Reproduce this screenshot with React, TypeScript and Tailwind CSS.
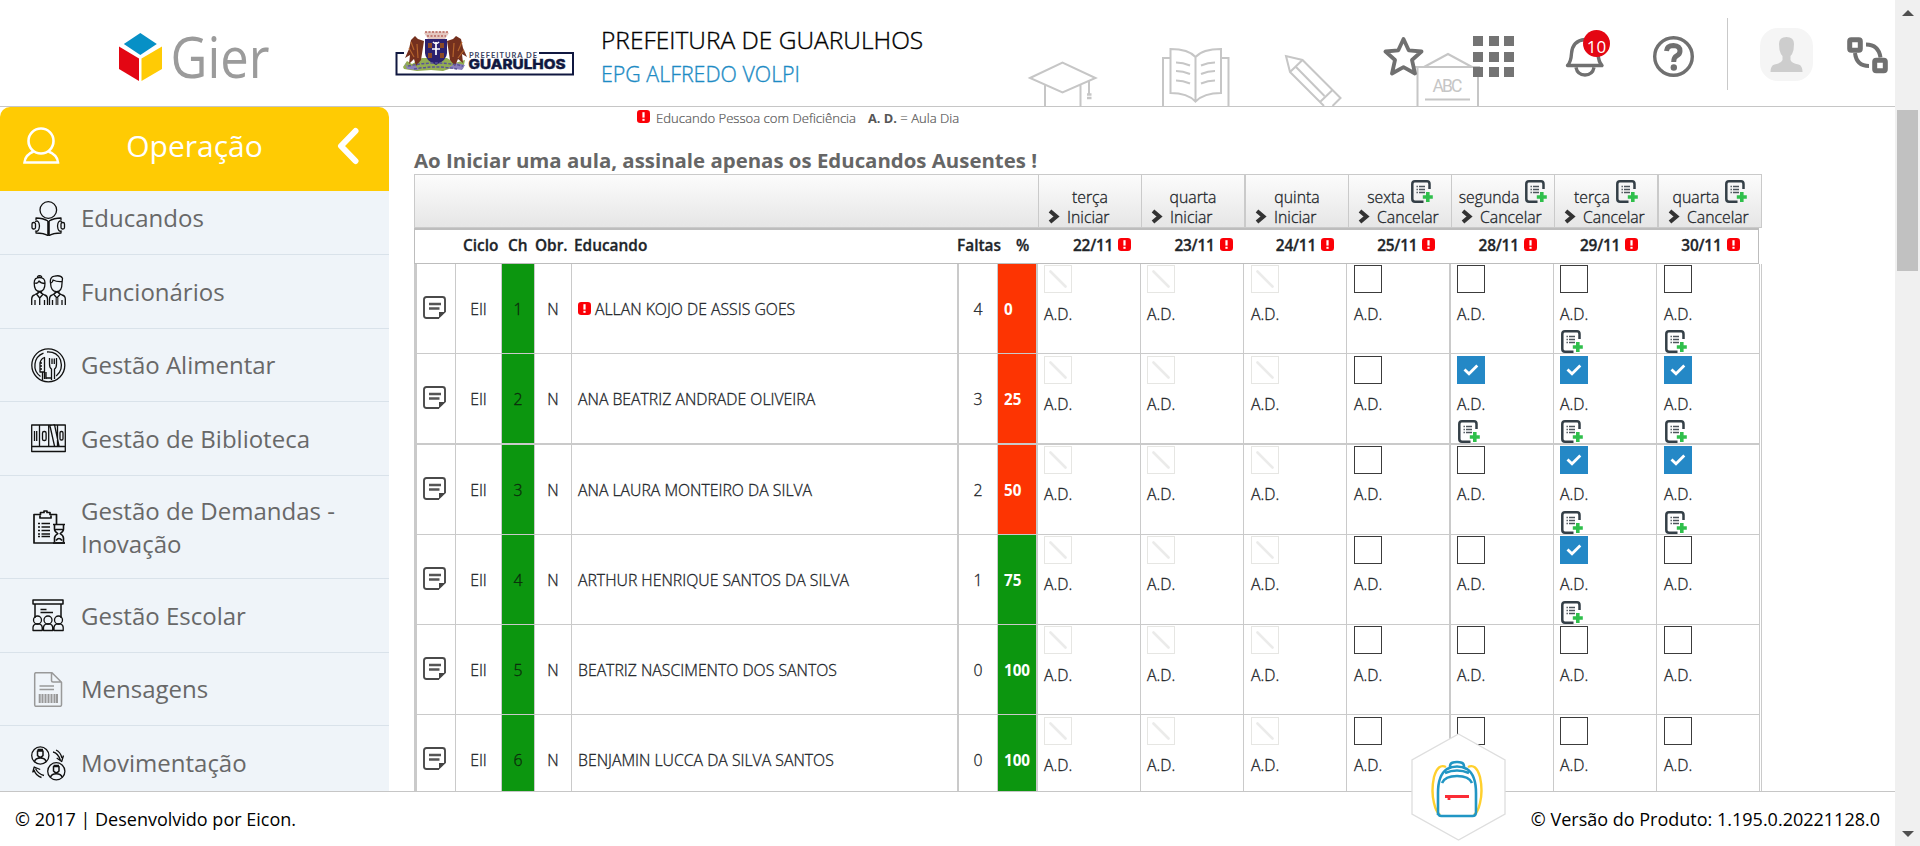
import type { ReactNode } from "react";

const Alert = ({ className = "" }: { className?: string }) => (
  <svg className={`h-[13px] w-[13px] shrink-0 ${className}`} viewBox="0 0 13 13">
    <rect width="13" height="13" rx="3.2" fill="#fb0007" />
    <rect x="5.4" y="2.2" width="2.2" height="5.4" fill="#fff" />
    <rect x="5.4" y="8.8" width="2.2" height="2" fill="#fff" />
  </svg>
);

const DocPlus = ({ className = "" }: { className?: string }) => (
  <svg className={`h-[23px] w-[22px] shrink-0 ${className}`} viewBox="0 0 22 23" fill="none">
    <path d="M18.500 9V4Q18.500 1.300 16 1.300H4Q1.300 1.300 1.300 4v15Q1.300 21.700 4 21.700h8.500" stroke="#343f47" strokeWidth="2.500" />
    <path d="M5.500 6.500h1.400M8 6.500h6M5.500 9.500h1.400M8 9.500h6M5.500 12.500h1.400M8 12.500h6" stroke="#4d555c" strokeWidth="1.700" />
    <path d="M16.800 12v10M11.800 17h10" stroke="#2fbf4b" strokeWidth="3.600" />
  </svg>
);

const Note = () => (
  <svg className="h-[23px] w-[23px]" viewBox="0 0 23 23" fill="none">
    <path d="M16 22H3.500Q1 22 1 19.500V3.500Q1 1 3.500 1h16Q22 1 22 3.500V16" stroke="#4a4a4a" strokeWidth="1.900" />
    <path d="M16 22.500V16h6.800z" fill="#444" />
    <path d="M6 8h12M6 12.500h10.500" stroke="#555" strokeWidth="2.300" />
  </svg>
);

const Arrow = () => (
  <svg className="h-[15px] w-[12px] shrink-0" viewBox="0 0 12 15" fill="none">
    <path d="M2 2l6.500 5.500L2 13" stroke="#333" strokeWidth="4" />
  </svg>
);

type Mark = "x" | "o" | "c";

const Box = ({ kind }: { kind: Mark }) => {
  if (kind === "c")
    return (
      <span className="flex h-7 w-7 items-center justify-center bg-[#2488c6]">
        <svg className="h-3 w-4" viewBox="0 0 16 12" fill="none">
          <path d="M1.500 5.500l4.500 4.300L14.300 1.500" stroke="#fff" strokeWidth="2.800" />
        </svg>
      </span>
    );
  if (kind === "x")
    return (
      <span className="flex h-7 w-7 items-center justify-center border border-[#e6e6e3]">
        <svg className="h-[18px] w-[18px]" viewBox="0 0 18 18">
          <path d="M1.500 1.500l15 15" stroke="#ebebea" strokeWidth="2.600" strokeLinecap="round" />
        </svg>
      </span>
    );
  return <span className="block h-7 w-7 border border-[#3c3c3c]" />;
};

const days = [
  { name: "terça", action: "Iniciar", date: "22/11" },
  { name: "quarta", action: "Iniciar", date: "23/11" },
  { name: "quinta", action: "Iniciar", date: "24/11", thick: true },
  { name: "sexta", action: "Cancelar", date: "25/11", doc: true },
  { name: "segunda", action: "Cancelar", date: "28/11", doc: true },
  { name: "terça", action: "Cancelar", date: "29/11", doc: true },
  { name: "quarta", action: "Cancelar", date: "30/11", doc: true, thick: true },
];

type Row = { n: number; name: string; alert?: boolean; miss: number; pct: number; marks: Mark[]; docs: number[]; h: string; top: string; line: string };

const rows: Row[] = [
  { n: 1, name: "ALLAN KOJO DE ASSIS GOES", alert: true, miss: 4, pct: 0, marks: ["x", "x", "x", "o", "o", "o", "o"], docs: [5, 6], h: "h-[90px] border-b", top: "pt-px", line: "leading-[25px]" },
  { n: 2, name: "ANA BEATRIZ ANDRADE OLIVEIRA", miss: 3, pct: 25, marks: ["x", "x", "x", "o", "c", "c", "c"], docs: [4, 5, 6], h: "h-[91px] border-b-2", top: "pt-[2px]", line: "leading-[25px]" },
  { n: 3, name: "ANA LAURA MONTEIRO DA SILVA", miss: 2, pct: 50, marks: ["x", "x", "x", "o", "o", "c", "c"], docs: [5, 6], h: "h-[90px] border-b", top: "pt-px", line: "leading-[23px]" },
  { n: 4, name: "ARTHUR HENRIQUE SANTOS DA SILVA", miss: 1, pct: 75, marks: ["x", "x", "x", "o", "o", "c", "o"], docs: [5], h: "h-[90px] border-b", top: "pt-px", line: "leading-[23px]" },
  { n: 5, name: "BEATRIZ NASCIMENTO DOS SANTOS", miss: 0, pct: 100, marks: ["x", "x", "x", "o", "o", "o", "o"], docs: [], h: "h-[90px] border-b", top: "pt-px", line: "leading-[25px]" },
  { n: 6, name: "BENJAMIN LUCCA DA SILVA SANTOS", miss: 0, pct: 100, marks: ["x", "x", "x", "o", "o", "o", "o"], docs: [], h: "h-[90px] border-b", top: "pt-[2px]", line: "leading-[25px]" },
];

const Icon = ({ children, color = "#111" }: { children: ReactNode; color?: string }) => (
  <svg className="h-[35px] w-[35px] shrink-0" viewBox="0 0 35 35" fill="none" stroke={color} strokeWidth="1.3" strokeLinejoin="round">
    {children}
  </svg>
);

const menu: { label: string; h: string; pad?: string; icon: ReactNode }[] = [
  {
    label: "Educandos",
    h: "h-[73px] border-b",
    pad: "pb-[2px]",
    icon: (
      <Icon>
        <circle cx="17.300" cy="9" r="8.300" />
        <path d="M17 20q-5-3-12-3v2M18 20q5-3 12-3v2M5 31v1q8 0 12.500 3 4.500-3 12.500-3v-1" />
        <path d="M17.500 20v14" strokeWidth="2.600" />
        <rect x="1" y="21.500" width="3.500" height="6.500" rx="1.500" />
        <rect x="30" y="21.500" width="3.500" height="6.500" rx="1.500" />
        <path d="M4 20.500q4-2 4.500 4.500-.5 6.500-4.500 5M31 20.500q-4-2-4.500 4.500.5 6.500 4.500 5" />
      </Icon>
    ),
  },
  {
    label: "Funcionários",
    h: "h-[74px] border-b",
    icon: (
      <Icon>
        <path d="M.7 31v-6q0-3.500 3-4.200L8.500 18l5 3q3 .7 3 4v6M4 31v-5M13.500 31v-5M8.700 23v8M5.500 20l3.200 4 3.500-4M3.200 9q0-5.500 5.400-5.500T14 9q0 8.500-5.400 8.500T3.200 9zM4 9q2.500 1 4-2 2 2.500 6 2.500M6.500 4q-.5-2 2-2.300 2.700.3 2.200 2.300M7 17v3M10.500 17v3" />
        <path d="M18.500 31v-6q0-3.500 3-4.200L26 18l5 3q3.300.7 3.300 4v6M21.500 31v-5M31 31v-5M22.500 20l3.400 4 3.500-4M19.500 9q-1-6 4-6.800 6-1.500 8 2l-.5 5q0 8.500-5.500 8.500T19.500 9zM20 9q2-1 2-3 4 2 9 1.500M24 17v3M28 17v3" />
        <path d="M26 24v7" strokeWidth="3" stroke="#555" />
      </Icon>
    ),
  },
  {
    label: "Gestão Alimentar",
    h: "h-[73px] border-b",
    pad: "pb-[2px]",
    icon: (
      <Icon>
        <circle cx="17.300" cy="17.300" r="16.500" />
        <path d="M9.500 28.500a13.300 13.300 0 0 1 3-23.300M16 4q10-.5 13.500 8 3 10-4.300 16" />
        <path d="M13.500 10v21M9 24V15q1-4.500 4.500-5.500v14.500zM9 15h2M9 18h2M9 21h2M11.500 24v8M15 31V24M18.500 10v6q0 4 2 5v11M25.500 10v6q0 4-2 5v10M21 10.500v5.500M23.300 10.500v5.500M15 30h5" />
      </Icon>
    ),
  },
  {
    label: "Gestão de Biblioteca",
    h: "h-[74px] border-b",
    icon: (
      <Icon>
        <path d="M.700 4h33.600v26.500H.700zM.700 25.500h33.600M8.500 4v21.500M17.700 4v21.500M26.500 4v21.500M18.500 4.500l5-.8 4.500 21.300M19 5l4.500 20M3.500 10v10M5.700 10v10" />
        <rect x="11.500" y="10.500" width="3.600" height="9" rx="1.600" />
        <rect x="29" y="10.500" width="3" height="8.500" rx="1.300" />
      </Icon>
    ),
  },
  {
    label: "Gestão de Demandas - Inovação",
    h: "h-[103px] border-b",
    icon: (
      <Icon>
        <path d="M25.500 14V4.500H19V2.500h-3V1h-3v1.500h-3.500v2H3V33h31M9 5.500v2.500h11V5.500" strokeWidth="1.700" />
        <path d="M7 13.500h2M10.500 13.500H19M7 17h2M10.500 17H19M7 20.500h2M10.500 20.500H19M7 24h2M10.500 24H19M7 26.500h2M10.500 26.500H19" strokeWidth="1.600" />
        <path d="M22 14.500h12M22 33h12M23.500 15v4q0 2.500 3.300 4.600-3.300 2-3.300 4.600V32M32.500 15v4q0 2.500-3.300 4.600 3.300 2 3.300 4.600V32M24.500 19.500h7M25 30.500q3-4 6 0" strokeWidth="1.600" />
      </Icon>
    ),
  },
  {
    label: "Gestão Escolar",
    h: "h-[74px] border-b",
    icon: (
      <Icon>
        <path d="M2 2h30v4H2zM4 6v14M30 6v14M9.500 11.500h6M9.500 14.500H22" strokeWidth="1.500" />
        <circle cx="6.500" cy="22" r="4" />
        <circle cx="17" cy="22" r="4" />
        <circle cx="27.500" cy="22" r="4" />
        <path d="M2 32.500v-3q0-2.500 2.500-3.500h4.200q2.500 1 2.500 3.500v3zM12.500 32.500v-3q0-2.500 2.500-3.500h4.200q2.500 1 2.500 3.500v3zM23 32.500v-3q0-2.500 2.500-3.500h4.200q2.500 1 2.500 3.500v3z" />
      </Icon>
    ),
  },
  {
    label: "Mensagens",
    h: "h-[73px] border-b",
    pad: "pb-[2px]",
    icon: (
      <Icon color="#999">
        <path d="M3.700 2Q3.700.7 5 .7h16l9.500 9.500v22.500q0 1.600-1.500 1.600H5q-1.300 0-1.300-1.600zM20.500 1v7.500q0 1.500 1.500 1.500h8M8.500 14h14.500M8.500 17.500h14.500" strokeWidth="1.500" />
        <path d="M8.700 22v9M11.500 22v9M14.500 22v9M17.500 22v9M20.500 22v9M23.500 22v9M26 22v9" strokeWidth="2" />
      </Icon>
    ),
  },
  {
    label: "Movimentação",
    h: "h-[74px]",
    pad: "pb-[2px]",
    icon: (
      <Icon>
        <circle cx="9.300" cy="9.500" r="8.600" />
        <circle cx="25.300" cy="25.300" r="8.600" />
        <path d="M6.500 5h5.500v4.500q-2.700 3.500-5.500 0zM3.500 15.500q1-3.500 5.800-3.500t5.800 3.500M22.500 20.500H28V25q-2.700 3.500-5.500 0zM19.500 31.300q1-3.500 5.800-3.500t5.800 3.500M6.500 3.500H12M22.500 19.500H28" strokeWidth="1.500" />
        <path d="M22 6q5 1 7.500 8.500M25 4q4.500 2 6 8M32.500 9.500l-1.800 6-5-3.500M13 29.500q-6-1.500-8.500-7M10.500 31.500Q5 30 3 24M1.700 26.500l1.500-5.500 6 2.500" />
      </Icon>
    ),
  },
];

const Doodles = () => (
  <svg className="absolute left-[1020px] top-[40px] h-[66px] w-[470px]" viewBox="1020 40 470 66" fill="none" stroke="#c6c6c6" strokeWidth="2">
    <path d="M1030 78l32.500-15.500L1095.500 78l-33 14.500zM1045 85v21M1080.500 85v21M1089 81v14" />
    <path d="M1087 94.500h4.500M1087 98h4.500" strokeWidth="2.500" />
    <path d="M1163 106V58h7M1228.500 106V58h-7M1170.500 49q18 0 25 8 7-8 25.500-8v44q-17 0-25.500 8.500-8-8.500-25-8.500zM1195.500 57v44" />
    <path d="M1176 62.500q7 0 14 3M1176 71q7 0 14 3M1176 80.500q7 0 14 3M1215 62.500q-7 0-14 3M1215 71q-7 0-14 3M1215 80.500q-7 0-14 3" />
    <path d="M1324 106l-34-34-4-16 16.500 4L1340.500 98l-8 8M1302.500 60L1290 72M1296 67l28.500 29M1332.500 90L1320 102" />
    <path d="M1424 67l24-13 24 13M1417.500 106V67M1478 106V67" />
    <path d="M1414 67h66M1425 99.500h45" />
    <text x="1432.500" y="92" fill="#c6c6c6" stroke="none" fontFamily="Roboto, sans-serif" fontSize="17.500" textLength="30">ABC</text>
  </svg>
);

const GierLogo = () => (
  <svg className="ml-[118px] h-[90px] w-[160px]" viewBox="118 9 160 90">
    <path d="M140.300 33l16.500 11L140.300 55 123.800 44z" fill="#0790c6" />
    <path d="M119 46.500l20 12V81l-20-12z" fill="#e30613" />
    <path d="M162 46.500l-20.500 12V81L162 69z" fill="#ffcb05" />
    <text x="170.500" y="78" fontFamily="Open Sans, sans-serif" fontSize="56" textLength="99" lengthAdjust="spacingAndGlyphs" fill="#9b9b9b">Gier</text>
  </svg>
);

const CityLogo = () => (
  <svg className="ml-[116px] mt-[20px] h-[50px] w-[182px]" viewBox="394 29 182 50">
    <path d="M404 53h-7.500v21.500H573V53h-34" fill="none" stroke="#101840" strokeWidth="2" />
    <path d="M403 67l4-6 5 3 10-6h25l8 5 10-3-2 9-8-2-12 4-12-1-14 1-13-2z" fill="#93ad52" />
    <path d="M405 63l3 4 7-2 4 5-12-1zM448 68l8-5 9 2-3 5z" fill="#8a7fbd" />
    <path d="M421 60l-5 6-2-7-5 5 1-9-5 3 4-9 2-9 4-4 3 3 6 2zM450 60l5 6 3-7 5 4-1-9 5 3-4-9-2-9-5-3-3 3-6 2z" fill="#74301e" />
    <path d="M411 42l3 8M409 48l5 9M462 42l-4 9M464 50l-6 8M417 44l1 14M454 43l-1 14" stroke="#b5642d" strokeWidth="1.200" />
    <path d="M424 33l4 6h17l4-6-3-1.500h-19z" fill="#e4c7c0" />
    <path d="M425 32h23M427 36h19" stroke="#b8675f" strokeWidth="1.500" strokeDasharray="2 1.500" />
    <path d="M425 39h22v14q0 7-11 12-11-5-11-12z" fill="#2b2170" />
    <path d="M428 43h4v5h-4zM440 43h4v5h-4zM428 53h4v5h-4zM440 53h4v5h-4z" fill="#8c4a26" />
    <path d="M436 42v13M432 49h8M433 42q3 3 6 0" stroke="#fff" strokeWidth="1.700" fill="none" />
    <path d="M408 66q28-6 55 0M414 69q22-4 43 0" stroke="#5a5399" strokeWidth="1.500" strokeDasharray="3 1.500" fill="none" />
    <text x="469" y="57.500" fontFamily="Lato, sans-serif" fontWeight="700" fontSize="7.500" textLength="68" fill="#3a3f60">PREFEITURA DE</text>
    <text x="468.500" y="69" fontFamily="Inter, sans-serif" fontWeight="800" fontSize="13.500" textLength="97" lengthAdjust="spacingAndGlyphs" fill="#101840" stroke="#101840" strokeWidth=".4">GUARULHOS</text>
  </svg>
);

const Header = () => (
  <header className="relative flex h-[107px] shrink-0 items-start border-b border-[#c6c6c6] bg-white">
    <Doodles />
    <div className="relative flex w-full items-start">
      <div className="flex pt-[9px]">
        <GierLogo />
        <CityLogo />
      </div>
      <div className="ml-[25px] w-[780px] pt-[23px]">
        <div className="text-[24.500px] font-light leading-[33px] text-black [-webkit-text-stroke:0.35px_#000]">PREFEITURA DE GUARULHOS</div>
        <div className="pt-px text-[21.400px] font-light leading-[34px] text-[#1d8bc4] [-webkit-text-stroke:0.35px_#1d8bc4]">EPG ALFREDO VOLPI</div>
      </div>
      <svg className="ml-0.5 mt-[36px] h-[41px] w-[41px]" viewBox="0 0 41 41" fill="none" stroke="#707070" strokeWidth="3.800" strokeLinejoin="round">
        <path d="M20.500 3l5.200 11.300 12.800 1.200-9.500 8.500 3 13.500-11.500-6.300L9 37.500l3-13.500-9.500-8.500 12.800-1.200z" />
      </svg>
      <div className="ml-[49px] mt-[36px] grid h-[41px] w-[41px] grid-cols-3 gap-[5.500px]">
        {Array.from({ length: 9 }, (_, i) => (
          <span key={i} className="bg-[#747474]" />
        ))}
      </div>
      <div className="relative ml-[51px] mt-[36px]">
        <svg className="h-[41px] w-[40px]" viewBox="0 0 40 41" fill="none" stroke="#707070" strokeWidth="3.400">
          <path d="M2.500 29.500q3.500-3.500 4-12Q7.500 4.500 20 3.500q12 1 13 14 .5 8.500 4 12zM11 31.500q1.500 7.500 9 7.500t9-7.500" strokeLinejoin="round" />
        </svg>
        <span className="absolute -top-[6px] left-[18px] flex h-[27px] w-[27px] items-center justify-center rounded-full bg-[#e40613] pt-1.5 text-[17px] leading-none text-white">10</span>
      </div>
      <svg className="ml-[48px] mt-[36px] h-[41px] w-[41px]" viewBox="0 0 41 41" fill="none" stroke="#707070">
        <circle cx="20.500" cy="20.500" r="18.800" strokeWidth="3.400" />
        <path d="M13.500 15q.5-5.500 7-5.500 6.500.3 6.500 5.500 0 3.200-3.500 5Q20.700 21.500 20.700 26" strokeWidth="5" />
        <circle cx="20.800" cy="31.500" r="3.200" fill="#707070" stroke="none" />
      </svg>
      <span className="ml-[33px] mt-[18px] h-[72px] w-px bg-[#c9c9c9]" />
      <svg className="ml-[32px] mt-[28px] h-[53px] w-[53px]" viewBox="0 0 53 53">
        <rect width="53" height="53" rx="18" fill="#f5f5f5" />
        <path d="M19 16q0-7 7.500-7t7.500 7l-.5 6q-1 4-3 6v4q1 3 8 4.500 4 1 4 7.500H10.500q0-6.500 4-7.500 7-1.500 8-4.500v-4q-2-2-3-6z" fill="#cdcdcd" />
      </svg>
      <svg className="ml-[34px] mt-[37px] h-[37px] w-[41px]" viewBox="0 0 41 37" fill="none" stroke="#707070">
        <rect x="2.700" y="2.700" width="10.600" height="10.600" rx="1.500" strokeWidth="5" />
        <rect x="27.700" y="23.200" width="10.600" height="10.600" rx="1.500" strokeWidth="5" />
        <path d="M19 7.500q12.500 0 14.500 13M8 16q1.500 13 14 13" strokeWidth="4" />
      </svg>
    </div>
  </header>
);

const Sidebar = () => (
  <aside className="flex w-[389px] shrink-0 flex-col overflow-hidden bg-[#eff4f9]">
    <div className="h-[84px] shrink-0 bg-white">
      <div className="flex h-[84px] items-start rounded-t-[10px] bg-[#ffcb03]">
        <svg className="ml-[23px] mt-[20px] h-[37px] w-[37px]" viewBox="0 0 37 37" fill="none" stroke="#fff" strokeWidth="2.600">
          <ellipse cx="18" cy="14" rx="12.500" ry="12.500" />
          <path d="M10.500 24.500Q2 28 1.500 35.500h33.500Q34.500 28 25.500 24.500" />
        </svg>
        <span className="w-[269px] text-center text-[30px] leading-[77px] text-white">Operação</span>
        <svg className="ml-[6px] mt-[20px] h-[38px] w-[25px]" viewBox="0 0 25 38" fill="none">
          <path d="M20.500 4L6 19l14.500 15" stroke="#fff" strokeWidth="6" strokeLinecap="round" strokeLinejoin="round" />
        </svg>
      </div>
    </div>
    <nav className="min-h-0 flex-1 overflow-hidden">
      <ul className="-mt-[9px]">
        {menu.map((m) => (
          <li key={m.label} className={`flex items-center border-[#d9e2ea] pl-[31px] ${m.h}`}>
            {m.icon}
            <span className={`ml-[15px] w-[270px] text-[24px] leading-[33px] text-[#686868] ${m.pad ?? ""}`}>{m.label}</span>
          </li>
        ))}
      </ul>
    </nav>
  </aside>
);

const cell = "flex shrink-0 items-center border-[#cacaca]";

const Attendance = () => (
  <div className="w-[1348px] text-[15.800px] font-light text-[#212529] [-webkit-text-stroke:0.3px]">
    <div className="flex h-[54px] border-y border-r border-[#cacaca] bg-gradient-to-b from-[#fcfcfc] to-[#e6e6e6]">
      <div className="w-[624px] shrink-0 border-l border-[#cacaca]" />
      {days.map((d) => (
        <div key={d.date} className={`shrink-0 border-[#cacaca] ${d.thick ? "w-[104px] border-l-2" : "w-[103px] border-l"}`}>
          <div className="flex h-[34px] items-start justify-center gap-[6px]">
            <span className="pt-[11px] leading-[22px]">{d.name}</span>
            {d.doc && <DocPlus className="mt-[5px]" />}
          </div>
          <div className="flex h-[18px] items-start pl-[9px] leading-[17px]">
            <Arrow />
            <span className="ml-[7px]">{d.action}</span>
          </div>
        </div>
      ))}
    </div>
    <div className="flex h-[36px] w-[1345px] items-center border border-t-2 border-[#bdbdbd] pb-[2px] text-[15.400px] font-semibold">
      <span className="ml-[48px] w-[45px] shrink-0">Ciclo</span>
      <span className="w-[27px] shrink-0">Ch</span>
      <span className="w-[39px] shrink-0">Obr.</span>
      <span className="w-[383px] shrink-0">Educando</span>
      <span className="w-[59px] shrink-0">Faltas</span>
      <span className="w-[57px] shrink-0">%</span>
      {days.map((d) => (
        <span key={d.date} className="flex w-[101.400px] shrink-0 items-center tracking-[-0.200px]">
          {d.date}
          <Alert className="-mt-[2px] ml-[5px]" />
        </span>
      ))}
    </div>
    <div className="border-l-[3px] border-r border-[#cacaca] leading-[22px]">
      {rows.map((r) => (
        <div key={r.n} className={`flex w-[1343px] border-[#cacaca] ${r.h}`}>
          <div className={`${cell} w-[39px] items-start border-r pl-[6px] pt-[32px]`}>
            <Note />
          </div>
          <div className={`${cell} w-[46px] justify-center border-r pt-px`}>EII</div>
          <div className={`${cell} w-[33px] justify-center border-r bg-[#0c960f] pt-px text-[#0b2a0c]`}>{r.n}</div>
          <div className={`${cell} w-[37px] justify-center border-r pt-px`}>N</div>
          <div className={`${cell} w-[387px] border-r-2 pl-[6px] pt-px`}>
            {r.alert && <Alert className="-mt-[2px] mr-[4px]" />}
            {r.name}
          </div>
          <div className={`${cell} w-[39px] justify-center border-r pt-px`}>{r.miss}</div>
          <div className={`${cell} w-[40px] border-r-2 pl-[6px] pt-px text-[15.200px] font-bold text-white [-webkit-text-stroke:0] ${r.pct > 50 ? "bg-[#0c960f]" : "bg-[#fd3402]"}`}>{r.pct}</div>
          {r.marks.map((m, i) => (
            <div
              key={i}
              className={`shrink-0 border-[#cacaca] ${i === 3 ? "w-[104px] border-r-2" : "w-[103px] border-r"} ${i === 2 || i === 3 || i === 6 ? "pl-[7px]" : "pl-[6px]"}`}
            >
              <div className={`h-[38px] ${r.top}`}>
                <Box kind={m} />
              </div>
              <div className={`h-[28px] ${r.line}`}>A.D.</div>
              {r.docs.includes(i) && <DocPlus className="ml-px" />}
            </div>
          ))}
        </div>
      ))}
    </div>
  </div>
);

const Backpack = () => (
  <svg className="absolute left-[1411px] top-[732px] h-[110px] w-[95px]" viewBox="0 0 95 110" fill="none">
    <path d="M47.500 2L94 28v54L47.500 108 1 82V28z" fill="#fff" stroke="#dedede" strokeWidth="1.300" />
    <path d="M35 35q-8-4-12 10-3 14 0 26 2 9 6 12M57 35q8-4 12 10 3 14 0 26-2 9-6 12" stroke="#ffd02e" strokeWidth="2.400" />
    <path d="M27 83V61q0-18 9-24 10-5 20 0 9 6 9 24v19q0 4-3.500 4h-31q-3.500 0-3.500-4zM31 51q3-7 15-7t15 7M34 41q12-5 24 0M39 36v-2q0-4 7-4t7 4v2" stroke="#2196c4" strokeWidth="2.600" />
    <path d="M34 64.500h24M38 64v4" stroke="#fb2c36" strokeWidth="2.800" />
  </svg>
);

export default function App() {
  return (
    <div className="relative flex h-[846px] w-[1920px] overflow-hidden bg-white font-['Open_Sans',sans-serif]">
      <div className="flex w-[1895px] flex-col">
        <Header />
        <div className="flex h-[684px] shrink-0 overflow-hidden">
          <Sidebar />
          <main className="ml-[25px] flex flex-col">
            <div className="flex h-[36px] shrink-0 items-start pl-[223px] text-[13.100px] font-light leading-[23px] text-[#555] [-webkit-text-stroke:0.2px]">
              <Alert className="mr-[6px] mt-[3px]" />
              <span>Educando Pessoa com Deficiência</span>
              <span className="ml-[12px]">
                <span className="text-[12.800px] font-bold [-webkit-text-stroke:0]">A. D.</span> = Aula Dia
              </span>
            </div>
            <h1 className="h-[31px] text-[20.400px] font-bold leading-[34px] text-[#666]">Ao Iniciar uma aula, assinale apenas os Educandos Ausentes !</h1>
            <Attendance />
          </main>
        </div>
        <footer className="flex flex-1 items-center justify-between border-t border-[#c6c6c6] bg-white pl-[15px] pr-[15px] text-[18px] text-black">
          <span>© 2017 | Desenvolvido por Eicon.</span>
          <span>© Versão do Produto: 1.195.0.20221128.0</span>
        </footer>
      </div>
      <div className="flex w-[25px] flex-col items-center justify-between bg-[#f0f0f0] pb-[9px] pt-[10px]">
        <svg className="h-[6px] w-[12px]" viewBox="0 0 12 6">
          <path d="M6 0l6 6H0z" fill="#505050" />
        </svg>
        <span className="mb-auto mt-[94px] h-[161px] w-[21px] bg-[#c1c1c1]" />
        <svg className="h-[6px] w-[12px]" viewBox="0 0 12 6">
          <path d="M6 6l6-6H0z" fill="#505050" />
        </svg>
      </div>
      <Backpack />
    </div>
  );
}
